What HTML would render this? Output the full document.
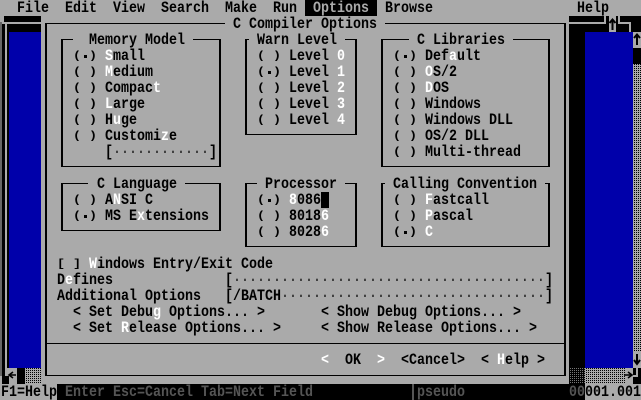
<!DOCTYPE html>
<html><head><meta charset="utf-8"><style>
html,body{margin:0;padding:0;background:#aaa}
#p{position:relative;width:641px;height:400px;overflow:hidden;background:#aaa}
#p div{position:absolute}
#p svg{position:absolute;left:0;top:0}
#p b{position:absolute;white-space:pre;font:bold 13.333px/13.333px "Liberation Mono",monospace;color:#000;height:13.333px;transform:scaleY(1.2);transform-origin:0 0;margin-top:1px}
#p b u{text-decoration:none;color:#fff}
#p b em{font-style:normal;font-weight:normal;color:#222}
#p b.r{transform:scaleY(.85);margin-top:3px}
#p div.o{width:3px;height:3px;background:#000}
.k{background:#000}.g{background:#aaa}.bl{background:#0000aa}
.dl{background:conic-gradient(#000 25%,#aaa 0) 0 0/2px 2px}
.dd{background:conic-gradient(#777 25%,#000 0) 0 0/2px 2px}
#p b.dk{color:#555}
#p b.w{color:#fff}
#p b.m{color:#aaa}
</style></head><body><div id="p">
<!-- left window -->
<div class="k" style="left:4px;top:16px;width:37px;height:6px"></div>
<div style="left:0;top:22px;width:2px;height:354px;background:#666"></div>
<div class="k" style="left:2px;top:24px;width:39px;height:352px"></div>
<div class="g" style="left:5px;top:23px;width:36px;height:1px"></div>
<div class="g" style="left:5px;top:23px;width:2px;height:353px"></div>
<div class="bl" style="left:9px;top:32px;width:32px;height:336px"></div>
<div class="g" style="left:7px;top:368px;width:10px;height:16px"></div>
<div class="k" style="left:2px;top:376px;width:7px;height:8px"></div>
<div class="k" style="left:17px;top:368px;width:8px;height:16px"></div>
<div class="dl" style="left:25px;top:368px;width:16px;height:16px"></div>
<!-- right window -->
<div class="k" style="left:569px;top:16px;width:72px;height:352px"></div>
<div class="g" style="left:569px;top:22px;width:35px;height:2px"></div>
<div class="g" style="left:604px;top:16px;width:2px;height:8px"></div>
<div class="g" style="left:609px;top:16px;width:7px;height:16px"></div>
<div class="g" style="left:618px;top:16px;width:2px;height:8px"></div>
<div class="g" style="left:620px;top:22px;width:9px;height:2px"></div>
<div class="g" style="left:629px;top:22px;width:2px;height:10px"></div>
<div class="bl" style="left:585px;top:32px;width:48px;height:336px"></div>
<div class="g" style="left:633px;top:32px;width:8px;height:16px"></div>
<div class="dl" style="left:633px;top:64px;width:8px;height:288px"></div>
<div class="g" style="left:633px;top:352px;width:8px;height:16px"></div>
<div class="dd" style="left:569px;top:368px;width:16px;height:16px"></div>
<div class="dl" style="left:585px;top:368px;width:40px;height:16px"></div>
<div class="k" style="left:633px;top:368px;width:8px;height:16px"></div>
<div class="g" style="left:636px;top:368px;width:2px;height:9px"></div>
<div class="g" style="left:633px;top:375px;width:5px;height:2px"></div>
<!-- menu -->
<div class="k" style="left:305px;top:0;width:72px;height:16px"></div>
<b style="left:17px;top:0">File</b><b style="left:65px;top:0">Edit</b><b style="left:113px;top:0">View</b><b style="left:161px;top:0">Search</b><b style="left:225px;top:0">Make</b><b style="left:273px;top:0">Run</b><b class="m" style="left:313px;top:0">Options</b><b style="left:385px;top:0">Browse</b><b style="left:577px;top:0">Help</b>
<!-- dialog frame -->
<div class="k" style="left:45px;top:23px;width:180px;height:1px"></div>
<div class="k" style="left:385px;top:23px;width:181px;height:1px"></div>
<div class="k" style="left:45px;top:23px;width:2px;height:353px"></div>
<div class="k" style="left:564px;top:23px;width:2px;height:353px"></div>
<div class="k" style="left:45px;top:375px;width:521px;height:1px"></div>
<div class="k" style="left:45px;top:343px;width:521px;height:1px"></div>
<b style="left:233px;top:16px">C Compiler Options</b>
<!-- Memory Model -->
<div style="left:61px;top:39px;width:156px;height:127px;border:solid #000;border-width:0 2px;border-bottom:1px solid #000"></div>
<div class="k" style="left:61px;top:39px;width:12px;height:1px"></div><div class="k" style="left:193px;top:39px;width:28px;height:1px"></div>
<b style="left:89px;top:32px">Memory Model</b>
<b class="r" style="left:73px;top:48px">( )</b><div class="o" style="left:84px;top:55px"></div><b style="left:105px;top:48px"><u>S</u>mall</b>
<b class="r" style="left:73px;top:64px">( )</b><b style="left:105px;top:64px"><u>M</u>edium</b>
<b class="r" style="left:73px;top:80px">( )</b><b style="left:105px;top:80px">Compac<u>t</u></b>
<b class="r" style="left:73px;top:96px">( )</b><b style="left:105px;top:96px"><u>L</u>arge</b>
<b class="r" style="left:73px;top:112px">( )</b><b style="left:105px;top:112px">H<u>u</u>ge</b>
<b class="r" style="left:73px;top:128px">( )</b><b style="left:105px;top:128px">Customi<u>z</u>e</b>
<b style="left:105px;top:144px">[<em>············</em>]</b>
<!-- Warn Level -->
<div style="left:245px;top:39px;width:108px;height:95px;border:solid #000;border-width:0 2px;border-bottom:1px solid #000"></div>
<div class="k" style="left:245px;top:39px;width:4px;height:1px"></div><div class="k" style="left:345px;top:39px;width:12px;height:1px"></div>
<b style="left:257px;top:32px">Warn Level</b>
<b class="r" style="left:257px;top:48px">( )</b><b style="left:289px;top:48px">Level <u>0</u></b>
<b class="r" style="left:257px;top:64px">( )</b><div class="o" style="left:268px;top:71px"></div><b style="left:289px;top:64px">Level <u>1</u></b>
<b class="r" style="left:257px;top:80px">( )</b><b style="left:289px;top:80px">Level <u>2</u></b>
<b class="r" style="left:257px;top:96px">( )</b><b style="left:289px;top:96px">Level <u>3</u></b>
<b class="r" style="left:257px;top:112px">( )</b><b style="left:289px;top:112px">Level <u>4</u></b>
<!-- C Libraries -->
<div style="left:381px;top:39px;width:165px;height:127px;border:solid #000;border-width:0 2px;border-bottom:1px solid #000"></div>
<div class="k" style="left:381px;top:39px;width:28px;height:1px"></div><div class="k" style="left:513px;top:39px;width:37px;height:1px"></div>
<b style="left:417px;top:32px">C Libraries</b>
<b class="r" style="left:393px;top:48px">( )</b><div class="o" style="left:404px;top:55px"></div><b style="left:425px;top:48px">Def<u>a</u>ult</b>
<b class="r" style="left:393px;top:64px">( )</b><b style="left:425px;top:64px"><u>O</u>S/2</b>
<b class="r" style="left:393px;top:80px">( )</b><b style="left:425px;top:80px"><u>D</u>OS</b>
<b class="r" style="left:393px;top:96px">( )</b><b style="left:425px;top:96px">Windows</b>
<b class="r" style="left:393px;top:112px">( )</b><b style="left:425px;top:112px">Windows DLL</b>
<b class="r" style="left:393px;top:128px">( )</b><b style="left:425px;top:128px">OS/2 DLL</b>
<b class="r" style="left:393px;top:144px">( )</b><b style="left:425px;top:144px">Multi-thread</b>
<!-- C Language -->
<div style="left:61px;top:183px;width:156px;height:47px;border:solid #000;border-width:0 2px;border-bottom:1px solid #000"></div>
<div class="k" style="left:61px;top:183px;width:27px;height:1px"></div><div class="k" style="left:185px;top:183px;width:36px;height:1px"></div>
<b style="left:97px;top:176px">C Language</b>
<b class="r" style="left:73px;top:192px">( )</b><b style="left:105px;top:192px">A<u>N</u>SI C</b>
<b class="r" style="left:73px;top:208px">( )</b><div class="o" style="left:84px;top:215px"></div><b style="left:105px;top:208px">MS E<u>x</u>tensions</b>
<!-- Processor -->
<div style="left:245px;top:183px;width:108px;height:63px;border:solid #000;border-width:0 2px;border-bottom:1px solid #000"></div>
<div class="k" style="left:245px;top:183px;width:12px;height:1px"></div><div class="k" style="left:345px;top:183px;width:12px;height:1px"></div>
<b style="left:265px;top:176px">Processor</b>
<b class="r" style="left:257px;top:192px">( )</b><div class="o" style="left:268px;top:199px"></div><b style="left:289px;top:192px"><u>8</u>086</b>
<div class="k" style="left:321px;top:192px;width:8px;height:16px"></div>
<b class="r" style="left:257px;top:208px">( )</b><b style="left:289px;top:208px">8018<u>6</u></b>
<b class="r" style="left:257px;top:224px">( )</b><b style="left:289px;top:224px">8028<u>6</u></b>
<!-- Calling Convention -->
<div style="left:381px;top:183px;width:165px;height:63px;border:solid #000;border-width:0 2px;border-bottom:1px solid #000"></div>
<div class="k" style="left:381px;top:183px;width:4px;height:1px"></div><div class="k" style="left:545px;top:183px;width:5px;height:1px"></div>
<b style="left:393px;top:176px">Calling Convention</b>
<b class="r" style="left:393px;top:192px">( )</b><b style="left:425px;top:192px"><u>F</u>astcall</b>
<b class="r" style="left:393px;top:208px">( )</b><b style="left:425px;top:208px"><u>P</u>ascal</b>
<b class="r" style="left:393px;top:224px">( )</b><div class="o" style="left:404px;top:231px"></div><b style="left:425px;top:224px"><u>C</u></b>
<!-- lower -->
<b class="r" style="left:57px;top:256px">[ ]</b><b style="left:89px;top:256px"><u>W</u>indows Entry/Exit Code</b>
<b style="left:57px;top:272px">D<u>e</u>fines</b>
<b style="left:225px;top:272px">[<em>·······································</em>]</b>
<b style="left:57px;top:288px">Additional Options</b>
<b style="left:225px;top:288px">[/BATCH<em>·································</em>]</b>
<b style="left:73px;top:304px">&lt; Set Debu<u>g</u> Options... &gt;</b>
<b style="left:321px;top:304px">&lt; Show Debug Options... &gt;</b>
<b style="left:73px;top:320px">&lt; Set <u>R</u>elease Options... &gt;</b>
<b style="left:321px;top:320px">&lt; Show Release Options... &gt;</b>
<b class="w" style="left:321px;top:352px">&lt;</b><b style="left:345px;top:352px">OK</b><b class="w" style="left:377px;top:352px">&gt;</b>
<b style="left:401px;top:352px">&lt;Cancel&gt;</b>
<b style="left:481px;top:352px">&lt; <u>H</u>elp &gt;</b>
<!-- status -->
<div class="k" style="left:57px;top:384px;width:528px;height:16px"></div>
<div style="left:412px;top:384px;width:2px;height:16px;background:#555"></div>
<b style="left:1px;top:384px">F1=Help</b>
<b class="dk" style="left:65px;top:384px">Enter Esc=Cancel Tab=Next Field</b>
<b class="dk" style="left:417px;top:384px">pseudo</b>
<b class="dk" style="left:569px;top:384px">00</b>
<b style="left:585px;top:384px">001.001</b>
<!-- scroll arrows -->
<svg width="641" height="400" viewBox="0 0 641 400" fill="none" stroke="#000">
<path d="M612.5 19V30M609.5 23L612.5 19.5L615.5 23" stroke-width="2"/>
<path d="M637 34V45M634 38L637 34.5L640 38" stroke-width="2"/>
<path d="M637 354V364M634 360L637 364L640 360" stroke-width="2"/>
<path d="M624 375H632M628 372L632 375L628 378" stroke-width="1.6"/>
<path d="M16 375H9M13 372L9 375L13 378" stroke-width="1.6"/>
</svg>
</div></body></html>
